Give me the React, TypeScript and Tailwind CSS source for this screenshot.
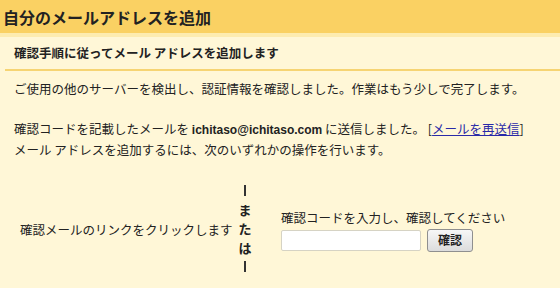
import React from "react";

const font = { fontFamily: '"Noto Sans CJK JP", "Noto Sans", sans-serif' };

function OrDivider() {
  return (
    <div className="flex flex-col items-center font-bold text-[13px] leading-[19px] text-[#222] w-[36px]">
      <div className="w-[2px] h-[11px] bg-[#333] my-[4px]" />
      <span>ま</span>
      <span>た</span>
      <span>は</span>
      <div className="w-[2px] h-[11px] bg-[#333] my-[4px]" />
    </div>
  );
}

export default function App() {
  return (
    <div
      className="w-[560px] h-[288px] bg-[#fff7d7] text-[#222] text-[12.5px] overflow-hidden"
      style={font}
    >
      <div className="h-[33px] bg-[#fad163] flex items-center pl-[3px]">
        <h1 className="text-[16px] font-bold leading-none">自分のメールアドレスを追加</h1>
      </div>
      <div className="h-[4px] bg-[#fdecb0]" />
      <div className="h-[32px] flex items-center pl-[14px]">
        <h2 className="font-bold leading-none">確認手順に従ってメール アドレスを追加します</h2>
      </div>
      <div className="ml-[5px] h-[2px] bg-[#f6d473]" />

      <div className="pl-[14px]">
        <p className="mt-[8px] leading-[19px]">
          ご使用の他のサーバーを検出し、認証情報を確認しました。作業はもう少しで完了します。
        </p>
        <p className="mt-[21px] leading-[19px] whitespace-nowrap">
          確認コードを記載したメールを{" "}
          <b
            className="font-bold text-[12px]"
            style={{ fontFamily: '"Liberation Sans", Arial, sans-serif' }}
          >
            ichitaso@ichitaso.com
          </b>{" "}
          に送信しました。 [
          <a href="#" className="text-[#2a2aa8] underline">
            メールを再送信
          </a>
          ]
          <br />
          メール アドレスを追加するには、次のいずれかの操作を行います。
        </p>
      </div>

      <div className="flex items-center mt-[22px] h-[95px]">
        <div className="w-[227px] pl-[20px] pt-[4px] whitespace-nowrap">
          確認メールのリンクをクリックします
        </div>
        <OrDivider />
        <div className="flex flex-col pl-[18px] pt-[2px]">
          <span className="leading-[19px]">確認コードを入力し、確認してください</span>
          <div className="flex items-center gap-[6px] mt-[2px]">
            <input
              type="text"
              className="w-[140px] h-[21px] bg-white border border-[#d6d3c4] rounded-[2px] outline-none"
            />
            <button className="w-[46px] h-[23px] rounded-[3px] border border-[#8f8f8f] bg-gradient-to-b from-[#f7f7f7] to-[#dcdcdc] text-[12px] font-bold leading-none text-[#222]">
              確認
            </button>
          </div>
        </div>
      </div>
    </div>
  );
}
